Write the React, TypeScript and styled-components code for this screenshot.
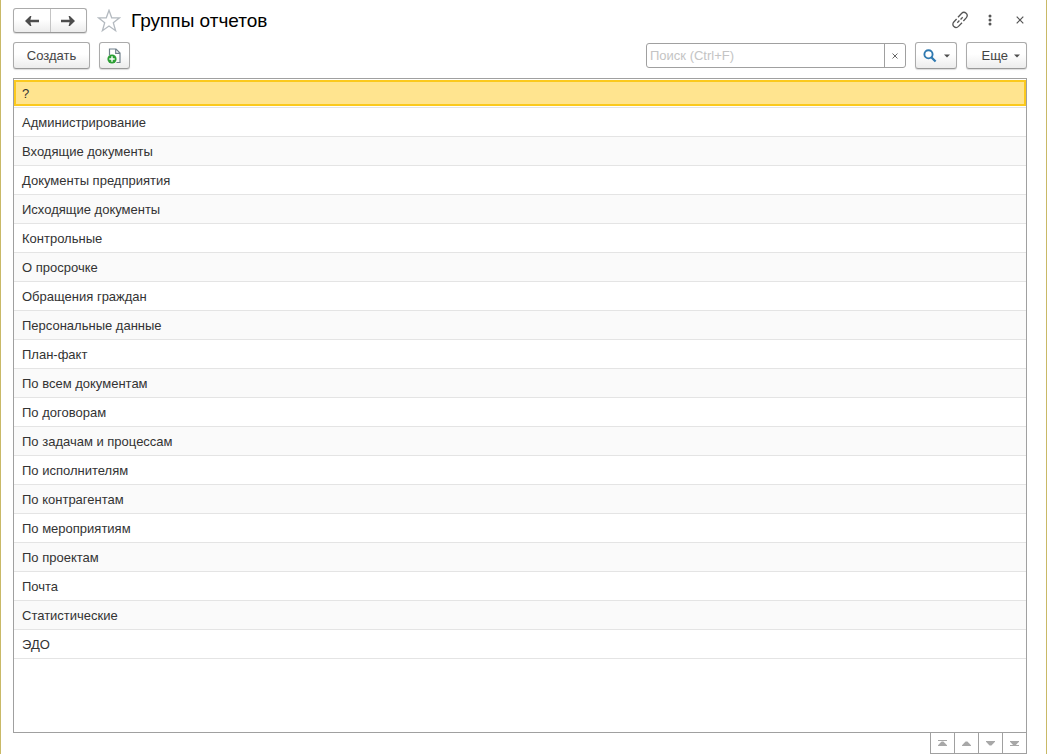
import React, { useState } from "react";
import styled, { createGlobalStyle, css } from "styled-components";

const GlobalStyle = createGlobalStyle`
  *, *::before, *::after { box-sizing: border-box; }
  body {
    margin: 0;
    background: #fff;
    color: #333;
    font: 13px/16px "Liberation Sans", Arial, sans-serif;
  }
  button, input { font: inherit; color: inherit; }
`;

const Window = styled.main`
  display: flex;
  flex-direction: column;
  min-height: 100vh;
  padding: 8px 19px 0 12px;
  border: solid #c9b967;
  border-width: 0 1px;
`;

const TitleBar = styled.header`
  display: flex;
  align-items: center;
  height: 25px;
`;

const raised = css`
  border: 1px solid #ababab;
  border-bottom-color: #999;
  border-radius: 3px;
  background: linear-gradient(#fff 0%, #fff 45%, #ececec 100%);
  box-shadow: 0 1px 1px rgba(0, 0, 0, 0.14);
`;

const History = styled.nav`
  ${raised}
  display: flex;
  width: 74px;
  height: 25px;
`;

const HistoryButton = styled.button`
  flex: 1;
  display: flex;
  align-items: center;
  justify-content: center;
  padding: 0;
  border: 0;
  background: none;
  & + & {
    border-left: 1px solid #c4c4c4;
  }
`;

const PlainButton = styled.button`
  display: flex;
  align-items: center;
  justify-content: center;
  width: 30px;
  height: 24px;
  padding: 0;
  border: 0;
  background: none;
`;

const Favorite = styled(PlainButton)`
  width: 24px;
  margin-left: 10px;
`;

const Title = styled.h1`
  margin: 0 auto 0 10px;
  color: #000;
  font-size: 19px;
  line-height: 24px;
  font-weight: 400;
`;

const WindowActions = styled.div`
  display: flex;
  align-self: flex-start;
  margin-right: -8px;
`;

const Toolbar = styled.div`
  display: flex;
  align-items: center;
  gap: 9px;
  margin: 9px 0;
`;

const ToolButton = styled.button<{ $width: number; $gap?: number }>`
  ${raised}
  display: flex;
  align-items: center;
  justify-content: center;
  gap: ${({ $gap = 0 }) => $gap}px;
  flex: none;
  width: ${({ $width }) => $width}px;
  height: 27px;
  padding: 0;
  color: #444;
`;

const MoreButton = styled(ToolButton)`
  justify-content: flex-end;
  padding-right: 6px;
`;

const SearchBox = styled.form`
  display: flex;
  flex: 0 1 260px;
  height: 25px;
  margin-left: auto;
  border: 1px solid #a0a0a0;
  border-radius: 3px;
`;

const SearchInput = styled.input`
  flex: 1;
  min-width: 0;
  padding: 0 3px;
  border: 0;
  outline: 0;
  background: none;
  &::placeholder {
    color: #c4c4c4;
    opacity: 1;
  }
`;

const ClearButton = styled.button`
  display: flex;
  align-items: center;
  justify-content: center;
  width: 21px;
  padding: 0;
  border: 0;
  border-left: 1px solid #a0a0a0;
  background: none;
`;

const List = styled.ul`
  flex: 1;
  margin: 0;
  padding: 0;
  border: 1px solid #a0a0a0;
  list-style: none;
`;

const Row = styled.li`
  height: 29px;
  padding: 1px 0;
  border-bottom: 1px solid #e4e4e4;
  &:nth-child(odd) {
    background: #fafafa;
  }
  &:first-child {
    background: #fff;
  }
`;

const RowButton = styled.button<{ $selected: boolean }>`
  display: block;
  width: 100%;
  height: 26px;
  padding: 2px 6px 0;
  border: 2px solid ${({ $selected }) => ($selected ? "#fbc91e" : "transparent")};
  background: ${({ $selected }) => ($selected ? "#ffe48f" : "none")};
  outline: 0;
  text-align: left;
`;

const Pager = styled.nav`
  display: flex;
  align-self: flex-end;
  border: solid #a0a0a0;
  border-width: 0 1px 1px;
`;

const PagerButton = styled.button`
  display: flex;
  align-items: center;
  justify-content: center;
  width: 24px;
  height: 20px;
  padding: 0;
  border: 0;
  background: none;
  &:first-child {
    width: 23px;
  }
  & + & {
    border-left: 1px solid #a0a0a0;
  }
`;

const Arrow = ({ right }: { right?: boolean }) => (
  <svg width="14" height="10" viewBox="0 0 14 10" fill="#4d4d4d">
    <path
      d={right
        ? "M0 3.700h8.600L7.600 0h1.300L14 5l-5.100 5H7.600l1-3.700H0z"
        : "M14 3.700H5.400L6.400 0H5.100L0 5l5.100 5h1.300l-1-3.700H14z"}
    />
  </svg>
);

const Star = () => (
  <svg width="24" height="24" viewBox="0 0 24 24" fill="none" stroke="#b4bac0" strokeWidth="1.3">
    <path d="M12 1.3l2.700 7.500h7.900l-6.300 4.900 2.300 8-6.600-4.700-6.600 4.700 2.300-8-6.300-4.900h7.900z" />
  </svg>
);

const LinkIcon = () => (
  <svg width="18" height="18" viewBox="0 0 18 18" fill="none" stroke="#555" strokeWidth="1.3">
    <path d="M7 6.200l3.500-3.700c1.300-1.300 3.300-1.400 4.600-.2s1.300 3.200.1 4.600L12.400 10" />
    <path d="M5.600 8L2.800 11c-1.300 1.400-1.200 3.400.1 4.600s3.300 1.100 4.600-.2L11 11.700" />
    <path d="M6.300 11.700l5.400-5.400" strokeDasharray="3 1.600" />
  </svg>
);

const Dots = () => (
  <svg width="4" height="12" viewBox="0 0 4 12" fill="#555">
    <circle cx="2" cy="2" r="1.500" />
    <circle cx="2" cy="6" r="1.500" />
    <circle cx="2" cy="10" r="1.500" />
  </svg>
);

const Cross = ({ size }: { size: number }) => (
  <svg width={size} height={size} viewBox="0 0 8 8" stroke="#555" strokeWidth="1.200">
    <path d="M.7.7l6.600 6.600M7.300.7L.7 7.300" />
  </svg>
);

const NewGroup = () => (
  <svg width="15" height="16" viewBox="0 0 15 16" fill="none">
    <path d="M2.500 7V1h6.500L13 5v9.500H9.500M8.700 1v4.300H13" stroke="#71808c" strokeWidth="1.200" />
    <circle cx="5" cy="11" r="4.600" fill="#2c9f35" />
    <path d="M5 8.300v5.400M2.300 11h5.400" stroke="#fff" strokeWidth="1.400" />
  </svg>
);

const Magnifier = () => (
  <svg width="14" height="14" viewBox="0 0 14 14" fill="none" stroke="#2f79b0">
    <circle cx="5.500" cy="5.300" r="4.100" strokeWidth="1.900" />
    <path d="M8.300 8.300l4.300 4.200" strokeWidth="2.300" />
  </svg>
);

const Caret = () => (
  <svg width="6" height="4" viewBox="0 0 6 4" fill="#4d4d4d">
    <path d="M0 .5h6L3 3.500z" />
  </svg>
);

const PagerIcon = ({ down, edge }: { down?: boolean; edge?: boolean }) => (
  <svg width="9" height="8" viewBox="0 0 9 8" fill="#a8a8a8">
    <path d={down ? "M0 2h9v.7L5.400 6.500H3.600L0 2.700z" : "M0 7h9v-.7L5.400 2.500H3.600L0 6.300z"} />
    {edge && <path d={down ? "M0 6h9v1H0z" : "M0 1h9v1H0z"} />}
  </svg>
);

const groups = [
  "?",
  "Администрирование",
  "Входящие документы",
  "Документы предприятия",
  "Исходящие документы",
  "Контрольные",
  "О просрочке",
  "Обращения граждан",
  "Персональные данные",
  "План-факт",
  "По всем документам",
  "По договорам",
  "По задачам и процессам",
  "По исполнителям",
  "По контрагентам",
  "По мероприятиям",
  "По проектам",
  "Почта",
  "Статистические",
  "ЭДО",
];

export default function App() {
  const [selected, setSelected] = useState(0);
  const [query, setQuery] = useState("");

  return (
    <>
      <GlobalStyle />
      <Window>
        <TitleBar>
          <History aria-label="История">
            <HistoryButton type="button" aria-label="Назад"><Arrow /></HistoryButton>
            <HistoryButton type="button" aria-label="Вперед"><Arrow right /></HistoryButton>
          </History>
          <Favorite type="button" aria-label="В избранное"><Star /></Favorite>
          <Title>Группы отчетов</Title>
          <WindowActions>
            <PlainButton type="button" aria-label="Получить ссылку"><LinkIcon /></PlainButton>
            <PlainButton type="button" aria-label="Меню"><Dots /></PlainButton>
            <PlainButton type="button" aria-label="Закрыть"><Cross size={8} /></PlainButton>
          </WindowActions>
        </TitleBar>

        <Toolbar>
          <ToolButton type="button" $width={77}>Создать</ToolButton>
          <ToolButton type="button" $width={31} aria-label="Создать группу"><NewGroup /></ToolButton>
          <SearchBox role="search" onSubmit={(e) => e.preventDefault()}>
            <SearchInput
              aria-label="Поиск"
              placeholder="Поиск (Ctrl+F)"
              value={query}
              onChange={(e) => setQuery(e.target.value)}
            />
            <ClearButton type="button" aria-label="Очистить" onClick={() => setQuery("")}>
              <Cross size={6} />
            </ClearButton>
          </SearchBox>
          <ToolButton type="button" $width={42} $gap={7} aria-label="Найти"><Magnifier /><Caret /></ToolButton>
          <MoreButton type="button" $width={61} $gap={6}>Еще<Caret /></MoreButton>
        </Toolbar>

        <List>
          {groups.map((name, i) => (
            <Row key={name}>
              <RowButton type="button" $selected={i === selected} onClick={() => setSelected(i)}>
                {name}
              </RowButton>
            </Row>
          ))}
        </List>
        <Pager aria-label="Прокрутка списка">
          <PagerButton type="button" aria-label="В начало"><PagerIcon edge /></PagerButton>
          <PagerButton type="button" aria-label="Вверх"><PagerIcon /></PagerButton>
          <PagerButton type="button" aria-label="Вниз"><PagerIcon down /></PagerButton>
          <PagerButton type="button" aria-label="В конец"><PagerIcon down edge /></PagerButton>
        </Pager>
      </Window>
    </>
  );
}
